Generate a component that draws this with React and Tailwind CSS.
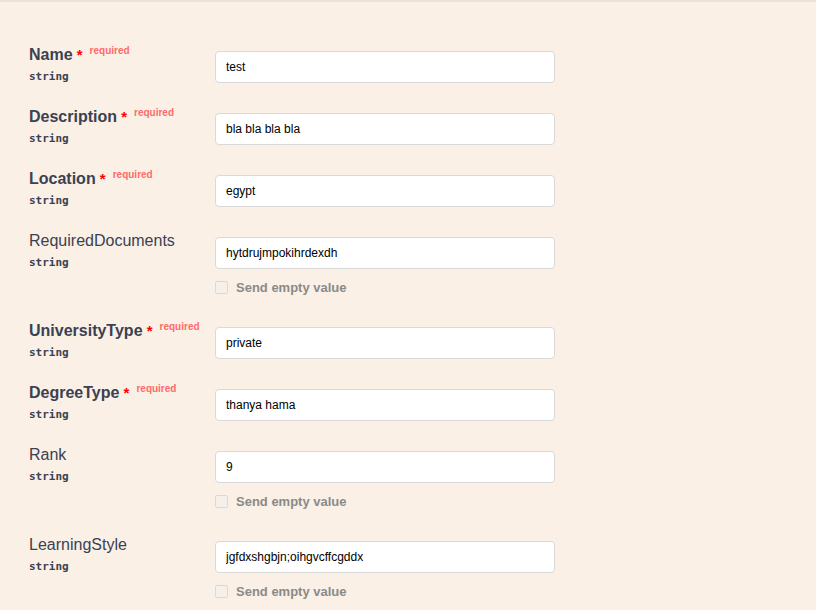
import React from 'react';

const fields = [
  { name: 'Name', required: true, value: 'test' },
  { name: 'Description', required: true, value: 'bla bla bla bla' },
  { name: 'Location', required: true, value: 'egypt' },
  { name: 'RequiredDocuments', value: 'hytdrujmpokihrdexdh', empty: true },
  { name: 'UniversityType', required: true, value: 'private' },
  { name: 'DegreeType', required: true, value: 'thanya hama' },
  { name: 'Rank', value: '9', empty: true },
  { name: 'LearningStyle', value: 'jgfdxshgbjn;oihgvcffcgddx', empty: true },
];

const Row = ({ field }) => (
  <div className="flex items-start py-[10px]">
    <div className="w-[186px] shrink-0 pt-[1px]">
      <div className={`h-[16px] leading-[16px] text-[16px] text-[#3b4151] whitespace-nowrap ${field.required ? 'font-bold' : ''}`}>
        {field.name}
        {field.required && (
          <>
            <span className="leading-none text-[#f00] text-[15px] font-bold"> *</span>
            <span className="relative top-[-6px] leading-none pl-[7px] text-[10px] font-bold text-[#ff6b6b]">required</span>
          </>
        )}
      </div>
      <div className="mt-[7px] h-[14px] leading-[14px] text-[11px] font-bold text-[#3b4151] font-['DejaVu_Sans_Mono',monospace]">string</div>
    </div>
    <div>
      <input
        readOnly
        value={field.value}
        className="my-[5px] block w-[340px] h-[32px] px-[10px] text-[12px] text-black bg-white border border-[#d9d9d9] rounded-[4px] outline-none"
      />
      {field.empty && (
        <label className="flex items-center h-[28px] pb-[1px] text-[13px] font-bold text-[#8a8a8a]">
          <span className="w-[13px] h-[13px] mr-[8px] border border-[#d9d9d9] rounded-[2px] bg-[#f5f0ea]" />
          Send empty value
        </label>
      )}
    </div>
  </div>
);

export default function App() {
  return (
    <div className="min-h-[610px] bg-[#faf0e6] border-t-2 border-[#ece3d3] font-['Liberation_Sans',Arial,sans-serif]">
      <div className="pl-[29px] pt-[34px]">
        {fields.map((f) => (
          <Row key={f.name} field={f} />
        ))}
      </div>
    </div>
  );
}
